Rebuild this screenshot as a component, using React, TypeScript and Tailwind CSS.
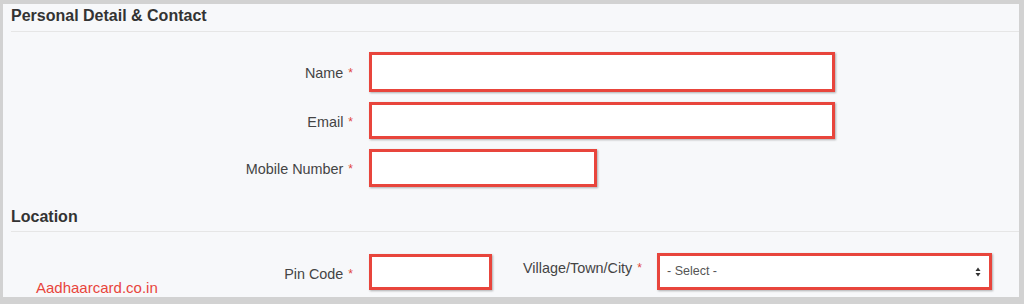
import React from "react";

const inputBox =
  "border-[3px] border-[#e8453c] bg-white shadow-[1px_1px_2px_rgba(0,0,0,0.3)]";

function Label({ text, className = "" }: { text: string; className?: string }) {
  return (
    <div className={`flex items-start text-[14.4px] leading-5 text-[#444] ${className}`}>
      <span>{text}</span>
      <span className="ml-[5px] mt-[2px] text-[12px] leading-4 text-[#e0463c]">*</span>
    </div>
  );
}

function Row({ label, inputClass }: { label: string; inputClass: string }) {
  return (
    <div className="flex items-center">
      <div className="w-[342px] shrink-0 flex justify-end mt-[2px]">
        <Label text={label} />
      </div>
      <div className={`ml-[16px] ${inputBox} ${inputClass}`} />
    </div>
  );
}

export default function App() {
  return (
    <div
      className="relative w-[1024px] h-[304px] overflow-hidden border-t-4 border-l-[3px] border-r-[5px] border-b-[7px] border-[#d2d2d2] bg-[#f7f8fa]"
      style={{ fontFamily: '"Liberation Sans", Arial, sans-serif' }}
    >
      <div className="pl-2">
        <h2 className="pt-[2px] pb-[5px] text-[16px] leading-5 font-bold text-[#333] border-b border-[#e6e6e6]">
          Personal Detail &amp; Contact
        </h2>

        <div className="mt-5 flex flex-col gap-[10px]">
          <Row label="Name" inputClass="w-[466px] h-[40px]" />
          <Row label="Email" inputClass="w-[466px] h-[37px]" />
          <Row label="Mobile Number" inputClass="w-[228px] h-[38px]" />
        </div>

        <h2 className="mt-5 pb-[4px] text-[16px] leading-5 font-bold text-[#333] border-b border-[#e6e6e6]">
          Location
        </h2>

        <div className="mt-[21px] flex items-center">
          <div className="w-[342px] shrink-0 flex justify-end">
            <Label text="Pin Code" className="mt-[4px]" />
          </div>
          <div className={`ml-[16px] w-[123px] h-[36px] ${inputBox}`} />
          <div className="w-[150px] shrink-0 flex justify-end self-start mt-[5px]">
            <Label text="Village/Town/City" />
          </div>
          <div
            className={`ml-[15px] w-[335px] h-[37px] flex items-center justify-between pl-[7px] pr-[8px] ${inputBox} bg-[#f8f8f8]`}
          >
            <span className="text-[12.5px] text-[#555]">- Select -</span>
            <svg width="6" height="10" viewBox="0 0 6 10" className="text-[#333]">
              <path d="M3 0.5 L5.5 4 L0.5 4 Z" fill="currentColor" />
              <path d="M3 9.5 L5.5 6 L0.5 6 Z" fill="currentColor" />
            </svg>
          </div>
        </div>
      </div>

      <div className="absolute left-[33px] top-[274px] text-[15px] leading-5 text-[#e8453c]">
        Aadhaarcard.co.in
      </div>
    </div>
  );
}
